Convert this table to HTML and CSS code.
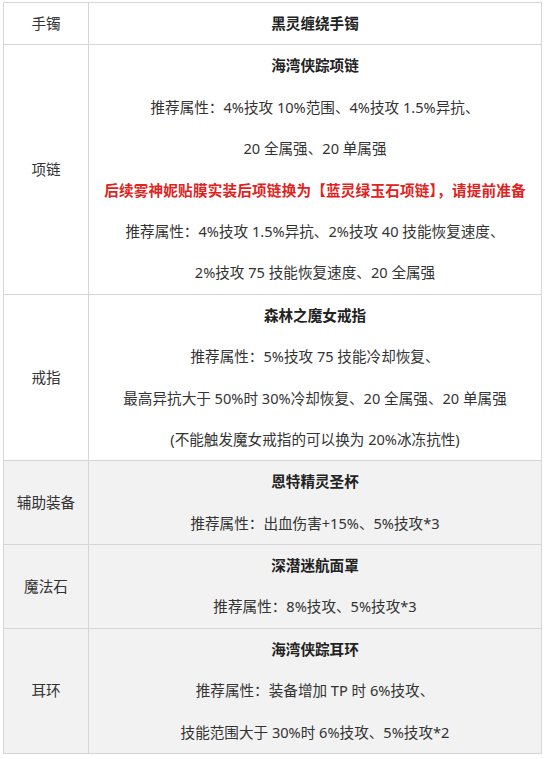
FILE: index.html
```html
<!DOCTYPE html>
<html lang="zh-CN">
<head>
<meta charset="utf-8">
<title>装备推荐</title>
<link rel="stylesheet" href="styles.css">
</head>
<body>
<div class="wrap">
<table class="equip">
  <tr>
    <td class="slot"><div class="ln">手镯</div></td>
    <td class="info"><div class="ln b">黑灵缠绕手镯</div></td>
  </tr>
  <tr>
    <td class="slot"><div class="ln">项链</div></td>
    <td class="info">
      <div class="ln b">海湾侠踪项链</div>
      <div class="ln">推荐属性：4%技攻 10%范围、4%技攻 1.5%异抗、</div>
      <div class="ln">20 全属强、20 单属强</div>
      <div class="ln b red">后续雾神妮贴膜实装后项链换为【蓝灵绿玉石项链】，请提前准备</div>
      <div class="ln">推荐属性：4%技攻 1.5%异抗、2%技攻 40 技能恢复速度、</div>
      <div class="ln">2%技攻 75 技能恢复速度、20 全属强</div>
    </td>
  </tr>
  <tr>
    <td class="slot"><div class="ln">戒指</div></td>
    <td class="info">
      <div class="ln b">森林之魔女戒指</div>
      <div class="ln">推荐属性：5%技攻 75 技能冷却恢复、</div>
      <div class="ln">最高异抗大于 50%时 30%冷却恢复、20 全属强、20 单属强</div>
      <div class="ln">(不能触发魔女戒指的可以换为 20%冰冻抗性)</div>
    </td>
  </tr>
  <tr class="gray">
    <td class="slot"><div class="ln">辅助装备</div></td>
    <td class="info">
      <div class="ln b">恩特精灵圣杯</div>
      <div class="ln">推荐属性：出血伤害+15%、5%技攻*3</div>
    </td>
  </tr>
  <tr class="gray">
    <td class="slot"><div class="ln">魔法石</div></td>
    <td class="info">
      <div class="ln b">深潜迷航面罩</div>
      <div class="ln">推荐属性：8%技攻、5%技攻*3</div>
    </td>
  </tr>
  <tr class="gray">
    <td class="slot"><div class="ln">耳环</div></td>
    <td class="info">
      <div class="ln b">海湾侠踪耳环</div>
      <div class="ln">推荐属性：装备增加 TP 时 6%技攻、</div>
      <div class="ln">技能范围大于 30%时 6%技攻、5%技攻*2</div>
    </td>
  </tr>
</table>
</div>
</body>
</html>
```

FILE: styles.css
```css
html, body {
  margin: 0;
  padding: 0;
  background: #ffffff;
}

.wrap {
  padding: 2px 0 0 3px;
}

.equip {
  border-collapse: collapse;
  width: 539px;
  table-layout: fixed;
  font-family: "Noto Sans", "Noto Sans CJK SC", sans-serif;
  font-size: 14.6px;
  color: #333333;
}

.equip td {
  border: 1px solid #d6d6d6;
  padding: 0;
  text-align: center;
  vertical-align: middle;
}

.equip td.slot {
  width: 84px;
}

.equip tr.gray td {
  background: #f2f2f2;
}

.ln {
  height: 41.4px;
  line-height: 41.4px;
  white-space: nowrap;
}

.b {
  font-weight: 700;
  color: #222222;
}

.red {
  color: #e2211c;
  letter-spacing: 0.2px;
}
```
